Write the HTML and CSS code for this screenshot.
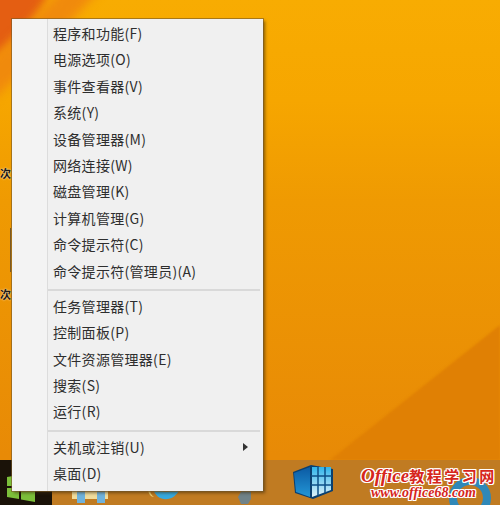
FILE: index.html
```html
<!DOCTYPE html>
<html lang="zh-CN">
<head>
    <meta charset="UTF-8">
    <meta name="viewport" content="width=device-width, initial-scale=1.0">
    <title>Win+X 菜单</title>
    <link rel="stylesheet" href="styles.css">
</head>
<body>
    <div class="desktop">
        <!-- Wallpaper -->
        <svg class="wallpaper" width="500" height="505" viewBox="0 0 500 505">
            <defs>
                <linearGradient id="wall" x1="0" y1="0" x2="0" y2="1">
                    <stop offset="0" stop-color="#f8ac02"/>
                    <stop offset="0.2" stop-color="#f6a600"/>
                    <stop offset="0.4" stop-color="#ef9a02"/>
                    <stop offset="0.9" stop-color="#e88a06"/>
                </linearGradient>
            </defs>
            <rect width="500" height="505" fill="url(#wall)"/>
            <path class="soft" d="M330 460 L500 325 V460 Z" fill="#e08004"/>
            <path class="blurred" d="M-20 -20 H55 C40 18 18 42 -20 70 Z" fill="#e45e12"/>
            <path class="blurred" d="M-20 70 C10 40 35 20 70 -20 H110 C60 30 30 70 -20 110 Z" fill="#f08a0c"/>
        </svg>

        <!-- Desktop icon labels, mostly hidden behind the menu -->
        <span class="icon-label label-one">次</span>
        <span class="icon-label label-two">次</span>
        <div class="edge-line"></div>

        <!-- Taskbar -->
        <div class="taskbar">
            <div class="start">
                <svg width="36" height="30" viewBox="0 0 36 30">
                    <path d="M7 5 L19 3 V14 H7 Z M21 2.500 L35 0 V14 H21 Z M7 16 H19 V27 L7 25 Z M21 16 H35 V30 L21 27.500 Z" fill="#7cbf3a"/>
                </svg>
            </div>
            <svg class="task-icon explorer" width="36" height="14" viewBox="0 0 36 14">
                <rect x="0" y="2" width="36" height="8" fill="#f0dc9c"/>
                <rect x="5" y="0" width="8" height="14" fill="#6fb2dc"/>
                <rect x="25" y="0" width="8" height="14" fill="#6fb2dc"/>
            </svg>
            <svg class="task-icon browser" width="36" height="12" viewBox="0 0 36 12">
                <path d="M1 0 C1 6 4 9 7 9 C3 6 3 3 3 0 Z" fill="#f0d070"/>
                <path d="M6 0 C9 15 28 15 33 0 L26 0 C24 5 14 5 12 0 Z" fill="#35a9de"/>
            </svg>
            <svg class="task-icon tools" width="16" height="14" viewBox="0 0 16 14">
                <path d="M5 0 H14 V9 L11 14 H4 L1 7 Z" fill="#6f8288"/>
            </svg>
            <svg class="task-icon store" width="40" height="34" viewBox="0 0 40 34">
                <defs>
                    <linearGradient id="face" x1="0" y1="0" x2="0" y2="1">
                        <stop offset="0" stop-color="#0b5aa3"/>
                        <stop offset="1" stop-color="#2396d6"/>
                    </linearGradient>
                    <linearGradient id="cells" x1="0" y1="0" x2="0" y2="1">
                        <stop offset="0" stop-color="#2fb4ea"/>
                        <stop offset="1" stop-color="#e2f3fa"/>
                    </linearGradient>
                </defs>
                <path d="M0 7 L18 0 L40 4 V26 L20 34 L2 28 Z" fill="#0a3f6f"/>
                <path d="M1 8 L17 2 V32 L3 27 Z" fill="url(#face)"/>
                <path d="M19 2 H38 V25 L19 32 Z" fill="url(#cells)"/>
                <path d="M25 1 V31 M32 2 V28 M18 11 H39 M18 20 H39" stroke="#0d4f86" stroke-width="1.500" fill="none"/>
            </svg>
            <svg class="task-icon ring" width="44" height="38" viewBox="0 0 44 38">
                <circle cx="22" cy="22" r="17" fill="none" stroke="#2f88b8" stroke-width="8"/>
            </svg>
        </div>

        <!-- Watermark -->
        <div class="watermark">
            <div class="mark-title"><span class="mark-office">Office</span>教程学习网</div>
            <div class="mark-url">www.office68.com</div>
        </div>

        <!-- Quick link menu -->
        <div class="menu">
            <div class="menu-group">
                <div class="menu-item">程序和功能(F)</div>
                <div class="menu-item">电源选项(O)</div>
                <div class="menu-item">事件查看器(V)</div>
                <div class="menu-item">系统(Y)</div>
                <div class="menu-item">设备管理器(M)</div>
                <div class="menu-item">网络连接(W)</div>
                <div class="menu-item">磁盘管理(K)</div>
                <div class="menu-item">计算机管理(G)</div>
                <div class="menu-item">命令提示符(C)</div>
                <div class="menu-item">命令提示符(管理员)(A)</div>
            </div>
            <div class="menu-line"></div>
            <div class="menu-group">
                <div class="menu-item">任务管理器(T)</div>
                <div class="menu-item">控制面板(P)</div>
                <div class="menu-item">文件资源管理器(E)</div>
                <div class="menu-item">搜索(S)</div>
                <div class="menu-item">运行(R)</div>
            </div>
            <div class="menu-line"></div>
            <div class="menu-group">
                <div class="menu-item has-sub">关机或注销(U)<span class="arrow"></span></div>
                <div class="menu-item">桌面(D)</div>
            </div>
        </div>
    </div>
</body>
</html>
```

FILE: styles.css
```css
html, body {
    margin: 0;
    padding: 0;
}

body {
    font-family: "Noto Sans CJK SC", "Liberation Sans", sans-serif;
    overflow: hidden;
}

.desktop {
    position: relative;
    width: 500px;
    height: 505px;
    overflow: hidden;
}

.wallpaper {
    position: absolute;
    top: 0;
    left: 0;
}

.soft {
    filter: blur(1px);
}

.blurred {
    filter: blur(5px);
}

/* Labels of desktop icons, mostly hidden behind the menu */
.icon-label {
    position: absolute;
    left: 0;
    font-size: 11px;
    font-weight: bold;
    line-height: 14px;
    color: #1f1a14;
    text-shadow: 0 0 2px #fff;
}

.label-one {
    top: 166px;
}

.label-two {
    top: 287px;
}

.edge-line {
    position: absolute;
    top: 228px;
    left: 10px;
    width: 1px;
    height: 44px;
    background-color: #7a5a28;
}

/* Taskbar */
.taskbar {
    position: absolute;
    left: 0;
    right: 0;
    bottom: 0;
    height: 45px;
    background-color: #c07b22;
}

.start {
    position: absolute;
    left: 0;
    bottom: 0;
    width: 52px;
    height: 45px;
    background-color: #1a1208;
}

.start svg {
    display: block;
    margin-top: 12px;
}

.task-icon {
    position: absolute;
}

.explorer {
    left: 72px;
    bottom: 2px;
}

.browser {
    left: 147px;
    bottom: 5px;
}

.tools {
    left: 237px;
    bottom: 1px;
}

.store {
    left: 293px;
    bottom: 6px;
}

.ring {
    left: 448px;
    bottom: -9px;
}

/* Watermark */
.watermark {
    position: absolute;
    top: 467px;
    left: 361px;
    width: 139px;
    font-family: "Liberation Serif", "Noto Sans CJK SC", serif;
    font-weight: bold;
    color: #d6261c;
    text-shadow: 1px 0 0 #fff, -1px 0 0 #fff, 0 1px 0 #fff, 0 -1px 0 #fff, 1px 1px 0 #fff, -1px -1px 0 #fff, 1px -1px 0 #fff, -1px 1px 0 #fff;
}

.mark-title {
    font-family: "Noto Sans CJK SC", sans-serif;
    font-size: 15px;
    line-height: 18px;
    letter-spacing: 2.500px;
    white-space: nowrap;
}

.mark-office {
    font-family: "Liberation Serif", serif;
    font-style: italic;
    font-size: 19px;
    letter-spacing: 0;
}

.mark-url {
    font-style: italic;
    font-size: 14px;
    line-height: 15px;
    margin-left: 10px;
    white-space: nowrap;
}

/* Menu */
.menu {
    position: absolute;
    top: 19px;
    left: 12px;
    width: 251px;
    height: 472px;
    box-sizing: border-box;
    padding-top: 1px;
    background-color: #f0f0f0;
    background-image: linear-gradient(to right, #f3f3f3 35px, #dcdcdc 35px, #dcdcdc 36px, transparent 36px);
    box-shadow: 0 0 0 1px rgba(120, 90, 40, 0.6), 2px 2px 3px rgba(60, 40, 10, 0.6);
}

.menu-item {
    position: relative;
    height: 26.400px;
    line-height: 26.400px;
    padding-left: 41px;
    font-size: 14px;
    letter-spacing: 0.300px;
    color: #2e2e2e;
    white-space: nowrap;
}

.menu-line {
    height: 2px;
    margin: 5px 3px 2px 36px;
    background-color: #d9d9d9;
}

.arrow {
    position: absolute;
    top: 9px;
    left: 231px;
    width: 0;
    height: 0;
    border-top: 4px solid transparent;
    border-bottom: 4px solid transparent;
    border-left: 5px solid #333;
}
```
